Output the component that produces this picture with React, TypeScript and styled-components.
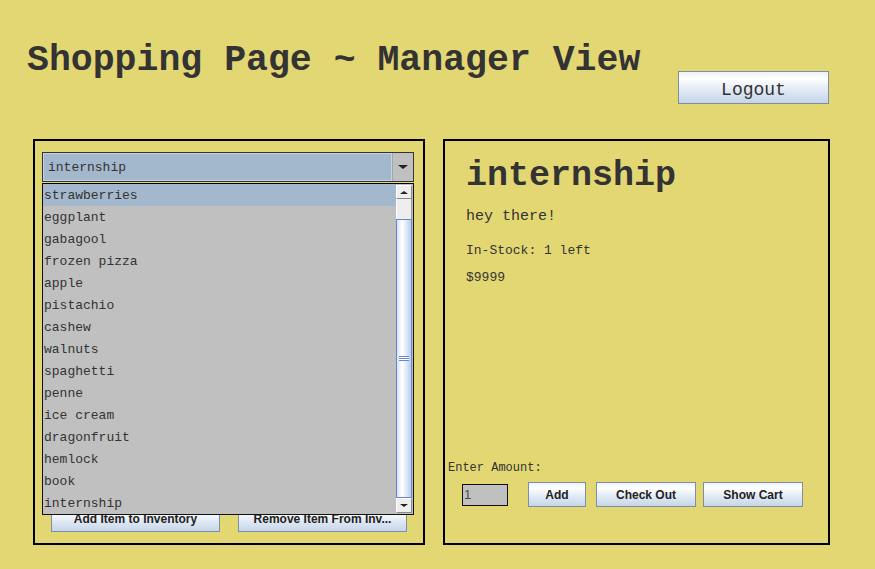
import React from "react";
import styled, { createGlobalStyle } from "styled-components";

const GlobalStyle = createGlobalStyle`
  html, body {
    margin: 0;
    padding: 0;
    background: #e3d774;
  }
  body {
    font-family: "Liberation Mono", "Courier New", monospace;
    color: #333;
  }
`;

const Page = styled.div`
  width: 875px;
  height: 569px;
  background: #e3d774;
  display: flex;
  flex-direction: column;
  overflow: hidden;
`;

const Header = styled.div`
  display: flex;
  justify-content: space-between;
  align-items: flex-start;
  height: 139px;
  padding: 0 46px 0 27px;
  box-sizing: border-box;
`;

const Title = styled.h1`
  margin: 43px 0 0;
  font-family: "Liberation Mono", "Courier New", monospace;
  font-size: 36.5px;
  line-height: 1;
  font-weight: bold;
  color: #333;
  white-space: nowrap;
`;

const SwingButton = styled.button<{ $w?: number; $h?: number; $mono?: boolean; $ml?: number }>`
  width: ${(p) => (p.$w ? `${p.$w}px` : "auto")};
  height: ${(p) => p.$h ?? 25}px;
  margin-left: ${(p) => p.$ml ?? 0}px;
  flex: ${(p) => (p.$w ? "0 0 auto" : "1 1 0")};
  padding: 0;
  border: 1px solid #7d8fa8;
  border-radius: 0;
  background: linear-gradient(to bottom, #edf2f9 0%, #ffffff 22%, #e3ebf5 55%, #c6d6e8 100%);
  font-family: ${(p) => (p.$mono ? `"Liberation Mono", "Courier New", monospace` : `"Liberation Sans", Arial, sans-serif`)};
  font-size: ${(p) => (p.$mono ? "18px" : "12px")};
  font-weight: ${(p) => (p.$mono ? "normal" : "bold")};
  color: #222;
  white-space: nowrap;
  overflow: hidden;
`;

const LogoutButton = styled(SwingButton)`
  margin-top: 71px;
  padding-top: 4px;
  color: #333;
`;

const Main = styled.div`
  display: flex;
  gap: 18px;
  padding: 0 45px 0 33px;
  height: 406px;
`;

const Panel = styled.div<{ $w: number }>`
  width: ${(p) => p.$w}px;
  height: 100%;
  box-sizing: border-box;
  border: 2px solid #000;
  display: flex;
  flex-direction: column;
`;

const LeftPanel = styled(Panel)`
  padding: 11px 0 11px 0;
`;

const ComboWrap = styled.div`
  position: relative;
  margin: 0 9px 0 7px;
  z-index: 2;
`;

const Combo = styled.div`
  height: 30px;
  box-sizing: border-box;
  border: 1px solid #333;
  display: flex;
  background: #c0c0c0;
`;

const ComboField = styled.div`
  flex: 1;
  border: 1px solid #c6d3e0;
  background: #a3b8cc;
  font-size: 13px;
  line-height: 28px;
  padding-left: 4px;
  color: #333;
`;

const ComboArrow = styled.div`
  width: 20px;
  display: flex;
  align-items: center;
  justify-content: center;
  background: #c0c0c0;
  border-left: 1px solid #9aa;
`;

const Triangle = styled.div<{ $up?: boolean; $size?: number }>`
  width: 0;
  height: 0;
  border-left: ${(p) => p.$size ?? 5}px solid transparent;
  border-right: ${(p) => p.$size ?? 5}px solid transparent;
  ${(p) =>
    p.$up
      ? `border-bottom: ${(p.$size ?? 5) - 1}px solid #222;`
      : `border-top: ${(p.$size ?? 5) - 1}px solid #222;`}
`;

const Popup = styled.div`
  position: absolute;
  top: calc(100% + 1px);
  left: 0;
  right: 0;
  border: 1px solid #111;
  border-top: 1px solid #000;
  background: #c0c0c0;
  display: flex;
`;

const List = styled.ul`
  list-style: none;
  margin: 0;
  padding: 0;
  flex: 1;
`;

const Item = styled.li<{ $selected?: boolean }>`
  height: 22px;
  box-sizing: border-box;
  line-height: 22px;
  padding: 1px 0 0 1px;
  font-size: 13px;
  color: #333;
  background: ${(p) => (p.$selected ? "#a3b8cc" : "transparent")};
  white-space: nowrap;
  overflow: hidden;
`;

const ScrollBar = styled.div`
  width: 16px;
  padding: 1px 1px 1px 0;
  display: flex;
  flex-direction: column;
  background: #c0c0c0;
`;

const ScrollBtn = styled.div<{ $h: number }>`
  height: ${(p) => p.$h}px;
  box-sizing: border-box;
  border: 1px solid #8a8a8a;
  border-top-color: #fff;
  border-left-color: #fff;
  background: #eeeeee;
  display: flex;
  align-items: center;
  justify-content: center;
`;

const Track = styled.div`
  height: 20px;
  background: #eeeeee;
  border-left: 1px solid #fff;
  border-right: 1px solid #999;
`;

const Thumb = styled.div`
  flex: 1;
  box-sizing: border-box;
  border: 1px solid #6787c6;
  background: linear-gradient(to right, #d5e2f5 0%, #ffffff 35%, #e6eef9 60%, #b9cde9 100%);
  display: flex;
  align-items: center;
  justify-content: center;
`;

const Grip = styled.div`
  width: 10px;
  height: 5px;
  background: repeating-linear-gradient(to bottom, #6787c6 0px, #6787c6 1px, #ffffff 1px, #ffffff 2px);
`;

const ButtonRow = styled.div`
  margin-top: auto;
  display: flex;
  gap: 18px;
  padding: 0 16px;
`;

const RightPanel = styled(Panel)``;

const Info = styled.div`
  padding: 18px 21px 0;
`;

const ItemName = styled.h2`
  margin: 0;
  font-size: 35px;
  line-height: 1;
  font-weight: bold;
  color: #333;
`;

const Text = styled.p<{ $size: number; $mt: number }>`
  margin: ${(p) => p.$mt}px 0 0;
  font-size: ${(p) => p.$size}px;
  line-height: 1;
  color: #333;
`;

const AmountBlock = styled.div`
  margin-top: auto;
  padding: 0 0 36px 3px;
`;

const AmountLabel = styled.div`
  font-size: 12px;
  line-height: 1;
  color: #333;
`;

const AmountRow = styled.div`
  display: flex;
  align-items: center;
  margin-top: 8px;
  padding-left: 14px;
`;

const AmountField = styled.div`
  width: 46px;
  height: 22px;
  box-sizing: border-box;
  border: 1px solid #111;
  background: #c0c0c0;
  font-family: "Liberation Sans", Arial, sans-serif;
  font-size: 13px;
  line-height: 20px;
  padding-left: 1px;
  color: #4a4a4a;
`;

const items = [
  "strawberries",
  "eggplant",
  "gabagool",
  "frozen pizza",
  "apple",
  "pistachio",
  "cashew",
  "walnuts",
  "spaghetti",
  "penne",
  "ice cream",
  "dragonfruit",
  "hemlock",
  "book",
  "internship",
];

export default function App() {
  return (
    <Page>
      <GlobalStyle />
      <Header>
        <Title>Shopping Page ~ Manager View</Title>
        <LogoutButton $w={151} $h={33} $mono>
          Logout
        </LogoutButton>
      </Header>
      <Main>
        <LeftPanel $w={392}>
          <ComboWrap>
            <Combo>
              <ComboField>internship</ComboField>
              <ComboArrow>
                <Triangle $size={5} />
              </ComboArrow>
            </Combo>
            <Popup>
              <List>
                {items.map((it, i) => (
                  <Item key={it} $selected={i === 0}>
                    {it}
                  </Item>
                ))}
              </List>
              <ScrollBar>
                <ScrollBtn $h={14}>
                  <Triangle $up $size={4} />
                </ScrollBtn>
                <Track />
                <Thumb>
                  <Grip />
                </Thumb>
                <ScrollBtn $h={15}>
                  <Triangle $size={4} />
                </ScrollBtn>
              </ScrollBar>
            </Popup>
          </ComboWrap>
          <ButtonRow>
            <SwingButton $h={26}>Add Item to Inventory</SwingButton>
            <SwingButton $h={26}>Remove Item From Inv...</SwingButton>
          </ButtonRow>
        </LeftPanel>
        <RightPanel $w={387}>
          <Info>
            <ItemName>internship</ItemName>
            <Text $size={15} $mt={15}>hey there!</Text>
            <Text $size={13} $mt={20}>In-Stock: 1 left</Text>
            <Text $size={13} $mt={14}>$9999</Text>
          </Info>
          <AmountBlock>
            <AmountLabel>Enter Amount:</AmountLabel>
            <AmountRow>
              <AmountField>1</AmountField>
              <SwingButton $w={58} $ml={20}>Add</SwingButton>
              <SwingButton $w={100} $ml={10}>Check Out</SwingButton>
              <SwingButton $w={100} $ml={7}>Show Cart</SwingButton>
            </AmountRow>
          </AmountBlock>
        </RightPanel>
      </Main>
    </Page>
  );
}
